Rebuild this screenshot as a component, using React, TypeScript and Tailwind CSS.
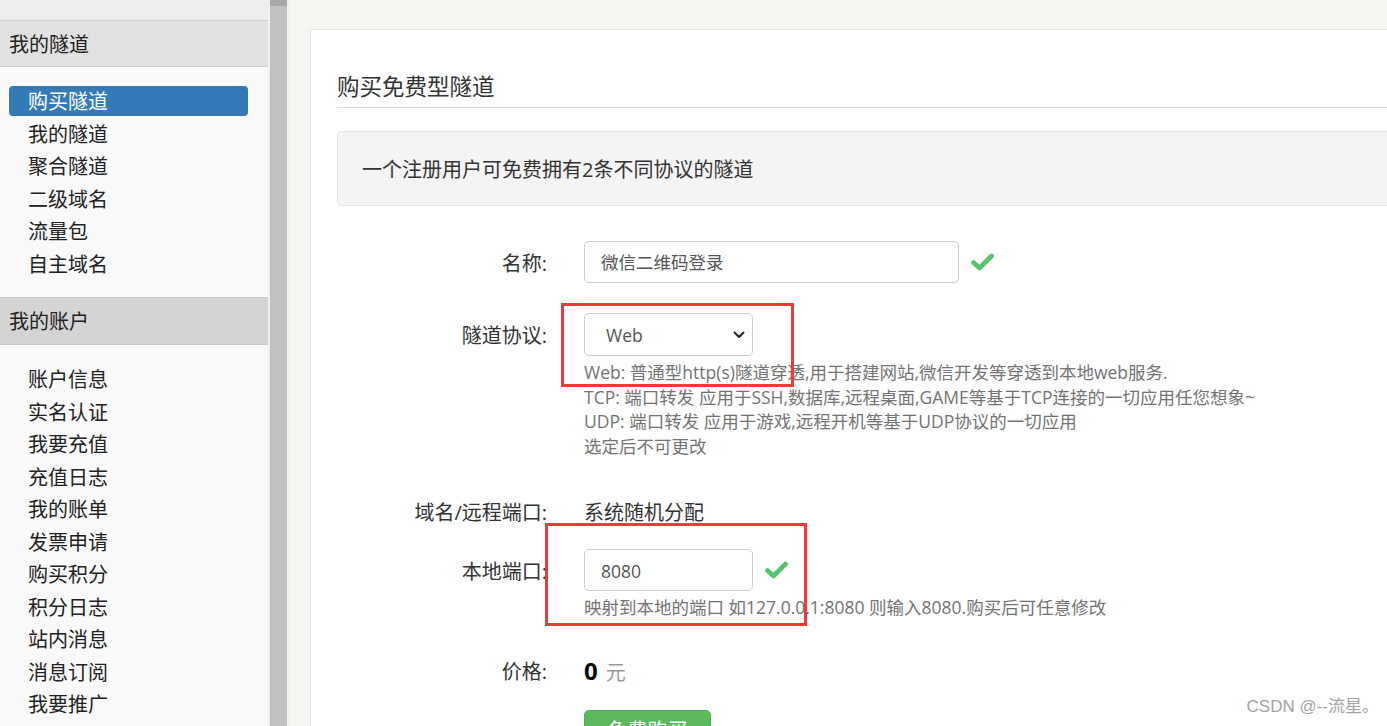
import React from "react"

const menuTunnel = ["购买隧道", "我的隧道", "聚合隧道", "二级域名", "流量包", "自主域名"]
const menuAccount = [
  "账户信息",
  "实名认证",
  "我要充值",
  "充值日志",
  "我的账单",
  "发票申请",
  "购买积分",
  "积分日志",
  "站内消息",
  "消息订阅",
  "我要推广",
]

const helpLines = [
  "Web: 普通型http(s)隧道穿透,用于搭建网站,微信开发等穿透到本地web服务.",
  "TCP: 端口转发 应用于SSH,数据库,远程桌面,GAME等基于TCP连接的一切应用任您想象~",
  "UDP: 端口转发 应用于游戏,远程开机等基于UDP协议的一切应用",
  "选定后不可更改",
]

function Check() {
  return (
    <svg width="23" height="18" viewBox="0 0 23 18" className="shrink-0">
      <path d="M2.5 9.5 L8.5 15 L20.5 3" fill="none" stroke="#52c46b" strokeWidth="4.6" strokeLinecap="round" strokeLinejoin="round" />
    </svg>
  )
}

function MenuItem({ label, active }: { label: string; active?: boolean }) {
  return (
    <div className="h-[32.5px] flex items-center">
      <div
        className={
          active
            ? "h-[30px] w-full flex items-center pl-[19px] pt-[2px] rounded-[4px] bg-[#337ab7] text-white"
            : "h-[30px] w-full flex items-center pl-[19px] pt-[2px] text-[#222]"
        }
      >
        {label}
      </div>
    </div>
  )
}

function Row({ label, children, className }: { label: string; children: React.ReactNode; className?: string }) {
  return (
    <div className={"flex " + (className ?? "")}>
      <div className="w-[210px] h-[42px] shrink-0 text-right text-[20px] leading-[38px] pt-[4px] text-[#333]">{label}</div>
      <div className="ml-[37px] flex-1">{children}</div>
    </div>
  )
}

export default function App() {
  return (
    <div className="relative w-[1387px] h-[726px] overflow-hidden flex bg-[#f6f5f1] font-['Open_Sans','Noto_Sans_CJK_SC',sans-serif] text-[#333]">
      {/* 侧边菜单 */}
      <div className="w-[268px] shrink-0 h-full bg-[#f9f9f9] text-[20px]">
        <div className="h-[21px] bg-[#eeeeee] border-b border-[#cfcfcf]" />
        <div className="h-[46px] flex items-center pl-[9px] pt-[2px] bg-[#e1e1e1] border-b border-[#cccccc] text-[#222]">我的隧道</div>
        <div className="pl-[9px] pr-[20px] pt-[18px] pb-[17px]">
          {menuTunnel.map((m, i) => (
            <MenuItem key={m} label={m} active={i === 0} />
          ))}
        </div>
        <div className="h-[48px] flex items-center pl-[9px] pt-[2px] bg-[#d4d4d4] border-y border-[#c9c9c9] text-[#222]">我的账户</div>
        <div className="pl-[9px] pr-[20px] pt-[18px]">
          {menuAccount.map((m) => (
            <MenuItem key={m} label={m} />
          ))}
        </div>
      </div>

      {/* 滚动条 */}
      <div className="w-[22px] shrink-0 h-full bg-[#f1f1f1] pl-[2px] pr-[3px]">
        <div className="h-[6px] bg-[#a8a8a8]" />
        <div className="h-full bg-[#c1c1c1]" />
      </div>

      {/* 主内容 */}
      <div className="flex-1 pt-[29px] pl-[20px]">
        <div className="h-full bg-white border-l border-t border-[#e4e4e4] pl-[26px]">
          <div className="pt-[41px] pb-[5px] border-b border-[#dddddd] text-[22.5px] leading-[31px] text-[#333]">购买免费型隧道</div>

          <div className="mt-[23px] h-[75px] flex items-center pl-[24px] pt-[2px] bg-[#f4f4f4] border border-r-0 border-[#e3e3e3] rounded-l-[5px] text-[20px] text-[#333]">
            一个注册用户可免费拥有2条不同协议的隧道
          </div>

          <div className="mt-[35px]">
            <Row label="名称:">
              <div className="flex items-center gap-[12px]">
                <div className="w-[375px] h-[42px] flex items-center pl-[16px] pt-[1px] border border-[#cccccc] rounded-[5px] text-[17.5px] text-[#555]">
                  微信二维码登录
                </div>
                <Check />
              </div>
            </Row>

            <Row label="隧道协议:" className="mt-[30px]">
              <div className="w-[169px] h-[43px] flex items-center justify-between pl-[21px] pr-[7px] pt-[1px] border border-[#cccccc] rounded-[5px] text-[17.5px] text-[#555]">
                <span>Web</span>
                <svg width="12" height="8" viewBox="0 0 12 8">
                  <path d="M1.5 1.5 L6 6 L10.5 1.5" fill="none" stroke="#222" strokeWidth="2" strokeLinecap="round" strokeLinejoin="round" />
                </svg>
              </div>
              <div className="mt-[4px] text-[17.5px] leading-[24.6px] text-[#737373]">
                {helpLines.map((l) => (
                  <div key={l}>{l}</div>
                ))}
              </div>
            </Row>

            <Row label="域名/远程端口:" className="mt-[32px]">
              <div className="h-[42px] text-[20px] leading-[38px] pt-[4px] text-[#333]">系统随机分配</div>
            </Row>

            <Row label="本地端口:" className="mt-[17px]">
              <div className="flex items-center gap-[12px]">
                <div className="w-[169px] h-[42px] flex items-center pl-[16px] pt-[1px] border border-[#cccccc] rounded-[5px] text-[17.5px] text-[#555]">
                  8080
                </div>
                <Check />
              </div>
              <div className="mt-[4px] text-[17.5px] leading-[24.6px] text-[#737373]">
                映射到本地的端口 如127.0.0.1:8080 则输入8080.购买后可任意修改
              </div>
            </Row>

            <Row label="价格:" className="mt-[29px]">
              <div className="flex items-baseline gap-[8px] h-[42px] leading-[40px] pt-[2px]">
                <span className="text-[24px] font-bold text-black">0</span>
                <span className="text-[20px] text-[#999]">元</span>
              </div>
            </Row>

            <div className="ml-[247px] mt-[19px]">
              <div className="w-[127px] h-[42px] flex items-center justify-center rounded-[5px] bg-[#5cb85c] border border-[#4cae4c] text-white text-[20px]">
                免费购买
              </div>
            </div>
          </div>
        </div>
      </div>

      {/* 标注框 */}
      <div className="absolute left-[561px] top-[303px] w-[233px] h-[84px] border-[3px] border-[#f03a3a]" />
      <div className="absolute left-[545px] top-[523px] w-[262px] h-[103px] border-[3px] border-[#f03a3a]" />

      {/* 水印 */}
      <div className="absolute right-[8px] top-[695px] text-[17px] leading-[24px] text-[#a3a3a3] font-['Liberation_Sans','Noto_Sans_CJK_SC',sans-serif]">
        CSDN @--流星。
      </div>
    </div>
  )
}
